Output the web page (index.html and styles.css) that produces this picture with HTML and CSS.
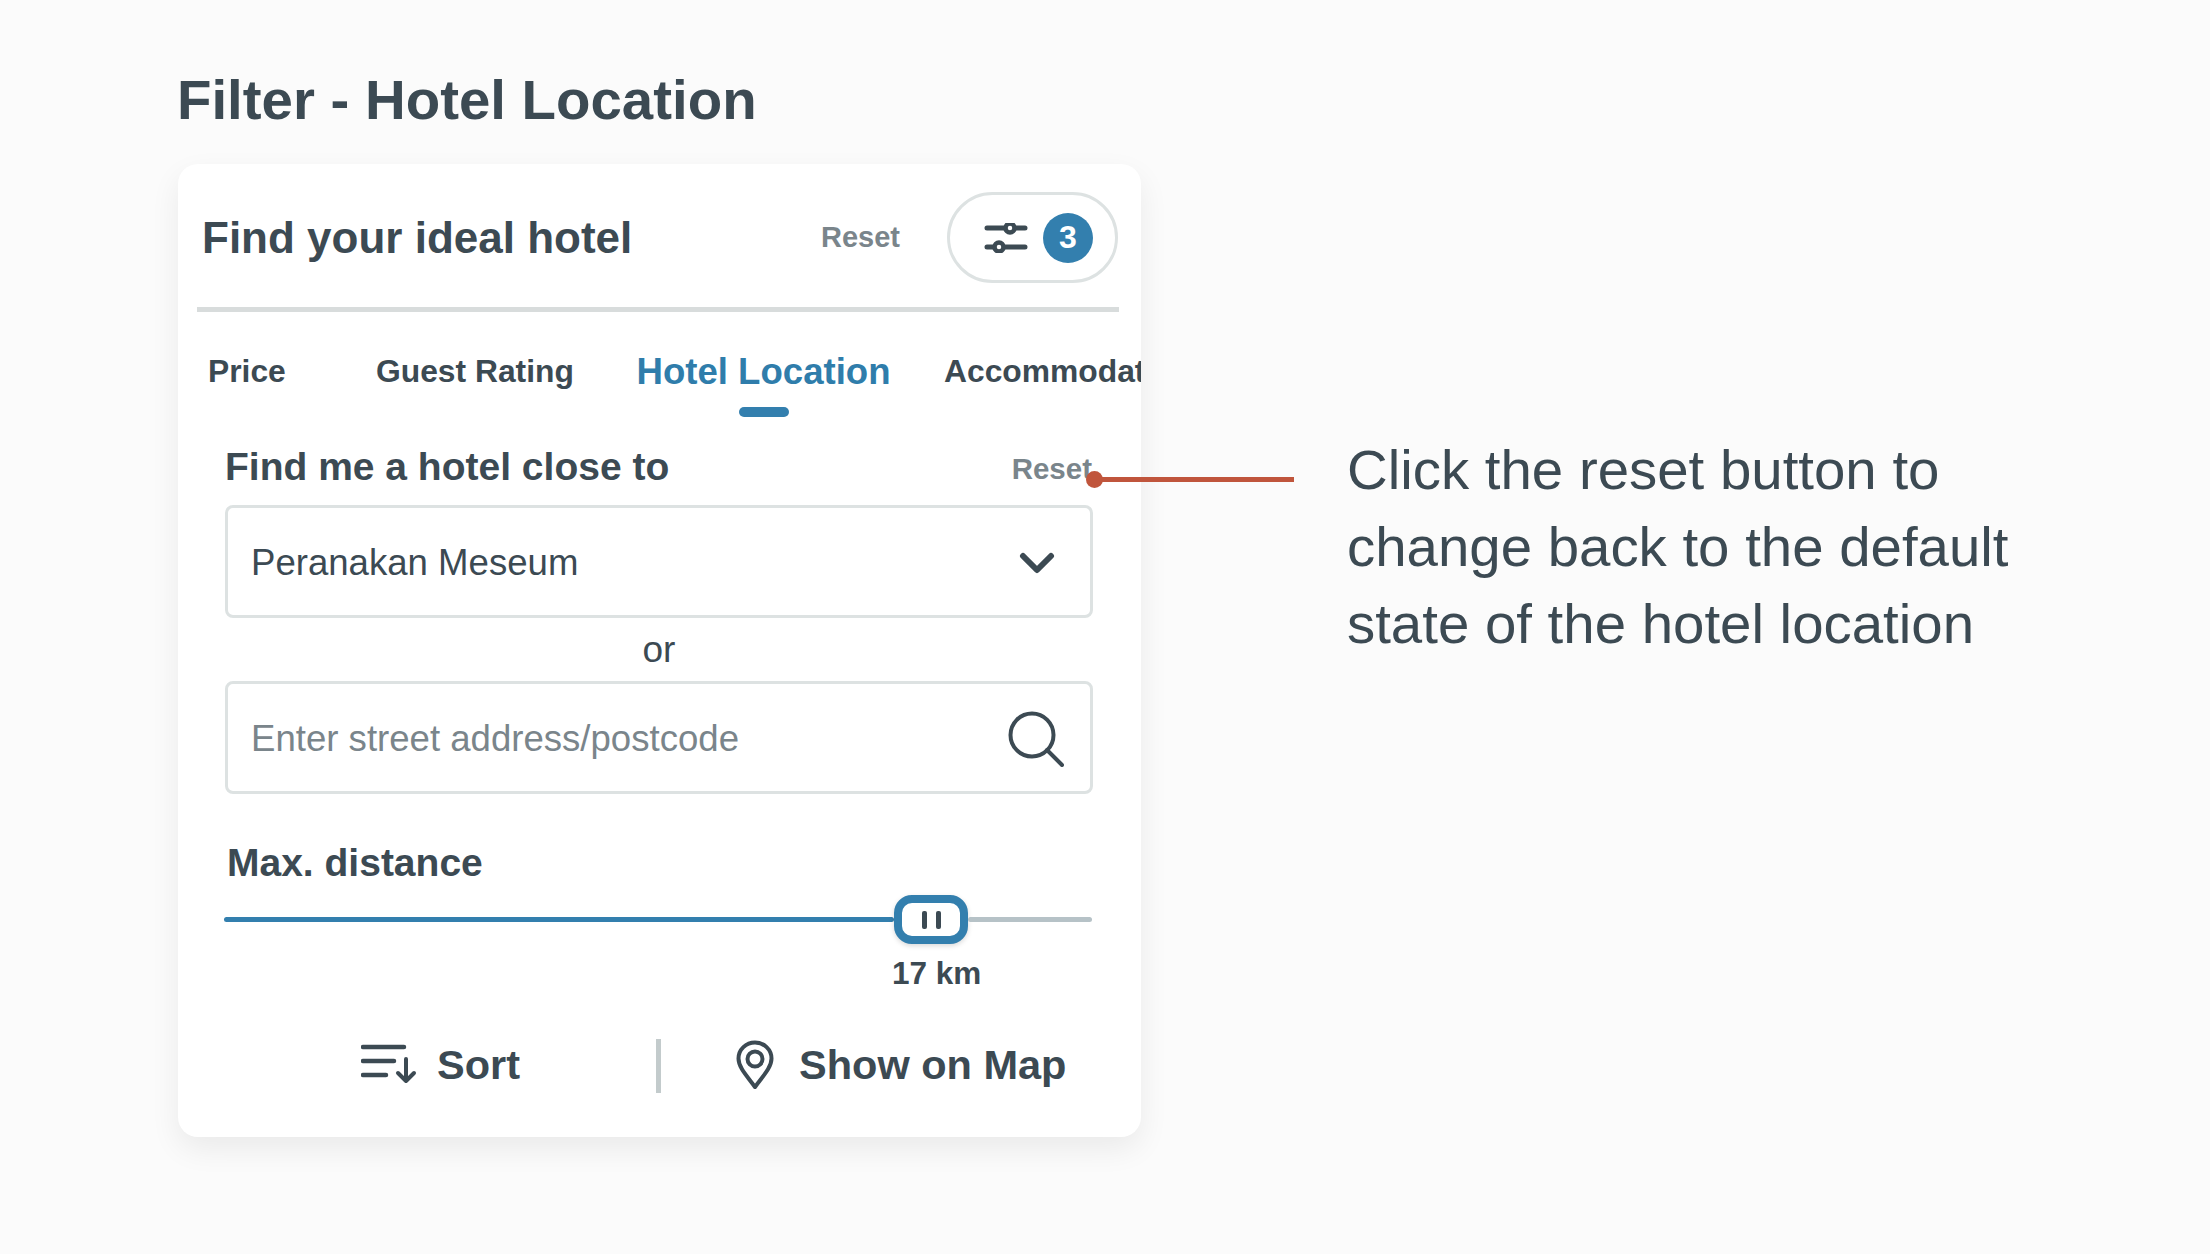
FILE: index.html
```html
<!DOCTYPE html>
<html>
<head>
    <title>Filter - Hotel Location</title>
    <link rel="stylesheet" href="styles.css">
</head>
<body>
    <div class="page">
        <div class="left">
            <h1 class="page-title">Filter - Hotel Location</h1>
            <div class="card">
                <div class="card-head">
                    <div class="card-title">Find your ideal hotel</div>
                    <div class="reset reset-head">Reset</div>
                    <div class="filter-pill">
                        <svg class="sliders-icon" width="44" height="30" viewBox="0 0 44 30">
                            <path d="M3 5H41M3 24H41" fill="none" stroke="#3c4a53" stroke-width="5" stroke-linecap="round"/>
                            <circle cx="26" cy="5" r="4.500" fill="#fff" stroke="#3c4a53" stroke-width="4.500"/>
                            <circle cx="15" cy="24" r="4.500" fill="#fff" stroke="#3c4a53" stroke-width="4.500"/>
                        </svg>
                        <span class="badge">3</span>
                    </div>
                </div>
                <div class="head-rule"></div>
                <div class="tabs">
                    <div class="tab">Price</div>
                    <div class="tab">Guest Rating</div>
                    <div class="tab tab-active">Hotel Location<span class="tab-mark"></span></div>
                    <div class="tab">Accommodation</div>
                </div>
                <div class="card-body">
                    <div class="field-head">
                        <div class="field-label">Find me a hotel close to</div>
                        <div class="reset reset-field">Reset</div>
                    </div>
                    <div class="box">
                        <span>Peranakan Meseum</span>
                        <svg class="chevron" width="36" height="22" viewBox="0 0 36 22">
                            <path d="M4 4L18 18L32 4" fill="none" stroke="#3c4a53" stroke-width="6" stroke-linecap="round" stroke-linejoin="round"/>
                        </svg>
                    </div>
                    <div class="or">or</div>
                    <div class="box box-placeholder">
                        <span>Enter street address/postcode</span>
                        <svg class="search" width="56" height="56" viewBox="0 0 56 56">
                            <circle cx="24" cy="24" r="21.5" fill="none" stroke="#3c4a53" stroke-width="4"/>
                            <path d="M39 39L54 54" fill="none" stroke="#3c4a53" stroke-width="4" stroke-linecap="round"/>
                        </svg>
                    </div>
                    <div class="field-label distance-label">Max. distance</div>
                    <div class="slider">
                        <div class="track track-on"></div>
                        <div class="thumb"><i></i><i></i></div>
                        <div class="track track-off"></div>
                    </div>
                    <div class="slider-value">17 km</div>
                    <div class="actions">
                        <div class="action action-sort">
                            <svg class="sort-icon" width="56" height="40" viewBox="0 0 56 40">
                                <path d="M2 3H43M2 17H33M2 31H25" fill="none" stroke="#3c4a53" stroke-width="4.5" stroke-linecap="round"/>
                                <path d="M45 15V37M37 29L45 37L53 29" fill="none" stroke="#3c4a53" stroke-width="4" stroke-linecap="round" stroke-linejoin="round"/>
                            </svg>
                            <span>Sort</span>
                        </div>
                        <div class="actions-rule"></div>
                        <div class="action action-map">
                            <svg width="38" height="50" viewBox="0 0 38 50">
                                <path d="M19 47C12 37 2.500 28 2.500 18.500C2.500 9.500 10 2.500 19 2.500C28 2.500 35.500 9.500 35.500 18.500C35.500 28 26 37 19 47Z" fill="none" stroke="#3c4a53" stroke-width="4" stroke-linejoin="round"/>
                                <circle cx="19" cy="19" r="7.500" fill="none" stroke="#3c4a53" stroke-width="4"/>
                            </svg>
                            <span>Show on Map</span>
                        </div>
                    </div>
                </div>
            </div>
        </div>
        <div class="note">Click the reset button to<br>change back to the default<br>state of the hotel location</div>
        <div class="pointer"><span class="pointer-dot"></span></div>
    </div>
</body>
</html>
```

FILE: styles.css
```css
* {
    box-sizing: border-box;
}

body {
    margin: 0;
    background-color: #fbfbfb;
    font-family: "Liberation Sans", Arial, sans-serif;
    color: #3c4a53;
}

.page {
    position: relative;
    display: flex;
    height: 1254px;
    padding-left: 178px;
    overflow: hidden;
}

.left {
    width: 963px;
    flex-shrink: 0;
}

.page-title {
    margin: 68px 0 32px -1px;
    font-size: 56.4px;
    line-height: 64px;
    font-weight: bold;
}

.card {
    background-color: #fff;
    border-radius: 20px;
    box-shadow: 0 12px 30px rgba(0, 0, 0, 0.07);
}

.card-head {
    display: flex;
    align-items: center;
    padding: 28px 23px 24px 24px;
}

.card-title {
    font-size: 44px;
    font-weight: bold;
}

.reset {
    color: #7a858b;
    font-size: 29px;
    font-weight: bold;
}

.reset-head {
    margin-left: auto;
    margin-right: 47px;
}

.filter-pill {
    display: flex;
    align-items: center;
    justify-content: space-between;
    width: 171px;
    height: 91px;
    padding: 0 22px 0 34px;
    border: 3px solid #dde2e2;
    border-radius: 46px;
}

.badge {
    display: flex;
    align-items: center;
    justify-content: center;
    width: 50px;
    height: 50px;
    border-radius: 50%;
    background-color: #337fae;
    color: #fff;
    font-size: 32px;
    font-weight: bold;
}

.head-rule {
    height: 5px;
    margin: 0 22px 0 19px;
    background-color: #d8dcdc;
}

.tabs {
    display: grid;
    grid-template-columns: 168px 261px 307px 1fr;
    margin-top: 39px;
    padding-left: 30px;
    overflow: hidden;
    white-space: nowrap;
}

.tab {
    font-size: 31.8px;
    line-height: 40px;
    font-weight: bold;
}

.tab-active {
    display: flex;
    flex-direction: column;
    align-items: center;
    width: 253px;
    padding-top: 1px;
    color: #2f7dab;
    font-size: 36.6px;
}

.tab-mark {
    width: 50px;
    height: 10px;
    margin-top: 15px;
    border-radius: 5px;
    background-color: #337fae;
}

.card-body {
    padding: 0 48px 44px 47px;
}

.field-head {
    display: flex;
    align-items: center;
    justify-content: space-between;
    margin-top: 28px;
    margin-bottom: 16px;
}

.field-label {
    font-size: 39px;
    line-height: 44px;
    font-weight: bold;
}

.reset-field {
    padding-top: 4px;
    padding-right: 1px;
    font-size: 29.5px;
}

.box {
    display: flex;
    align-items: center;
    justify-content: space-between;
    height: 113px;
    padding: 2px 35px 0 23px;
    border: 3px solid #dde2e2;
    border-radius: 8px;
    font-size: 36.6px;
}

.box-placeholder {
    padding-right: 26px;
    color: #7a858b;
}

.or {
    height: 63px;
    padding-top: 1px;
    line-height: 61px;
    text-align: center;
    font-size: 37px;
}

.distance-label {
    margin-top: 47px;
    margin-bottom: -1px;
    padding-left: 2px;
}

.slider {
    display: flex;
    align-items: center;
    height: 49px;
    margin: 11px 1px 0 -1px;
}

.track {
    height: 5px;
    border-radius: 3px;
}

.track-on {
    width: 670px;
    background-color: #337fae;
}

.track-off {
    flex: 1;
    background-color: #b6c2c7;
}

.thumb {
    display: flex;
    align-items: center;
    justify-content: center;
    gap: 9px;
    width: 74px;
    height: 49px;
    flex-shrink: 0;
    border: 8px solid #337fae;
    border-radius: 18px;
    background-color: #fff;
    box-shadow: 0 2px 5px rgba(0, 0, 0, 0.15);
}

.thumb i {
    width: 5px;
    height: 18px;
    border-radius: 2px;
    background-color: #3c4a53;
}

.slider-value {
    margin-top: 9px;
    padding-left: 667px;
    font-size: 31.5px;
    line-height: 40px;
    font-weight: bold;
}

.actions {
    display: grid;
    grid-template-columns: 431px 5px 1fr;
    height: 54px;
    margin-top: 46px;
}

.action {
    display: flex;
    align-items: center;
    padding-bottom: 2px;
    font-size: 41.5px;
    font-weight: bold;
}

.action-sort {
    gap: 20px;
    padding-left: 136px;
}

.sort-icon {
    margin-top: -2px;
}

.action-map {
    gap: 25px;
    padding-left: 75px;
}

.actions-rule {
    background-color: #c3cbcc;
}

.note {
    margin: 431px 0 0 206px;
    font-size: 56.4px;
    line-height: 77px;
    white-space: nowrap;
}

/* red marker from the card's reset link to the note */
.pointer {
    position: absolute;
    left: 1094px;
    top: 477px;
    width: 200px;
    height: 5px;
    background-color: #c0553c;
}

.pointer-dot {
    position: absolute;
    left: -8px;
    top: -6px;
    width: 17px;
    height: 17px;
    border-radius: 50%;
    background-color: #c0553c;
}
```
